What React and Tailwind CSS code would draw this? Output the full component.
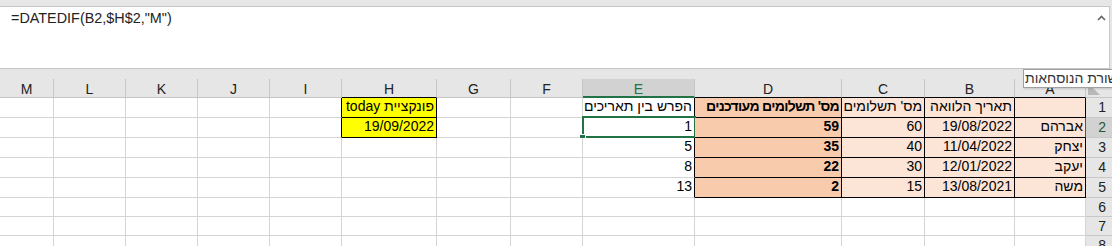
import React from "react";

const G = "border-r-[#d4d4d4]";
const GB = "border-b-[#d4d4d4]";
const K = "border-r-black";
const KB = "border-b-black";

const cols = [
  { k: "M", w: "w-[54px]" },
  { k: "L", w: "w-[72px]" },
  { k: "K", w: "w-[72px]" },
  { k: "J", w: "w-[72px]" },
  { k: "I", w: "w-[72px]" },
  { k: "H", w: "w-[95px]" },
  { k: "G", w: "w-[74px]" },
  { k: "F", w: "w-[72px]" },
  { k: "E", w: "w-[112px]" },
  { k: "D", w: "w-[147px]" },
  { k: "C", w: "w-[83px]" },
  { k: "B", w: "w-[90px]" },
  { k: "A", w: "w-[71px]" },
];

const LIGHT = "bg-[#fce4d6]";
const DARK = "bg-[#f8cbad]";
const YEL = "bg-[#ffff00]";

const data = {
  1: {
    H: { t: "פונקציית today", bg: YEL, rtl: true },
    E: { t: "הפרש בין תאריכים", rtl: true },
    D: { t: "מס' תשלומים מעודכנים", bg: DARK, bold: true, rtl: true, tight: true },
    C: { t: "מס' תשלומים", bg: LIGHT, rtl: true },
    B: { t: "תאריך הלוואה", bg: LIGHT, rtl: true },
    A: { t: "", bg: LIGHT },
  },
  2: {
    H: { t: "19/09/2022", bg: YEL },
    E: { t: "1", sel: true },
    D: { t: "59", bg: DARK, bold: true },
    C: { t: "60", bg: LIGHT },
    B: { t: "19/08/2022", bg: LIGHT },
    A: { t: "אברהם", bg: LIGHT, rtl: true },
  },
  3: {
    E: { t: "5" },
    D: { t: "35", bg: DARK, bold: true },
    C: { t: "40", bg: LIGHT },
    B: { t: "11/04/2022", bg: LIGHT },
    A: { t: "יצחק", bg: LIGHT, rtl: true },
  },
  4: {
    E: { t: "8" },
    D: { t: "22", bg: DARK, bold: true },
    C: { t: "30", bg: LIGHT },
    B: { t: "12/01/2022", bg: LIGHT },
    A: { t: "יעקב", bg: LIGHT, rtl: true },
  },
  5: {
    E: { t: "13" },
    D: { t: "2", bg: DARK, bold: true },
    C: { t: "15", bg: LIGHT },
    B: { t: "13/08/2021", bg: LIGHT },
    A: { t: "משה", bg: LIGHT, rtl: true },
  },
};

const rowHeights = {
  1: "h-[20px]",
  2: "h-[20px]",
  3: "h-[20px]",
  4: "h-[20px]",
  5: "h-[20px]",
  6: "h-[19px]",
  7: "h-[19px]",
  8: "h-[20px]",
};

function borders(col, row) {
  const inTable = ["A", "B", "C", "D"].includes(col) && row >= 1 && row <= 5;
  if (inTable) {
    if (col === "A" && row === 2) return `border-r-[#217346] ${KB}`;
    return `${K} ${KB}`;
  }
  if (col === "E" && row >= 1 && row <= 5) return `${K} ${GB}`;
  if (col === "H" && (row === 1 || row === 2)) return `${K} ${KB}`;
  if (col === "I" && (row === 1 || row === 2)) return `${K} ${GB}`;
  return `${G} ${GB}`;
}

function Cell({ col, row }) {
  const d = (data[row] && data[row][col.k]) || null;
  return (
    <div
      className={`relative box-border shrink-0 h-full border-r border-b ${col.w} ${borders(
        col.k,
        row
      )} ${d && d.bg ? d.bg : "bg-white"}`}
    >
      {d && d.t ? (
        <div
          dir={d.rtl ? "rtl" : "ltr"}
          className={`w-full overflow-hidden whitespace-nowrap pr-[2px] text-[14px] leading-[17px] text-black text-right ${
            d.bold ? "font-bold" : ""
          } ${d.tight ? "tracking-[-0.7px]" : ""}`}
        >
          {d.t}
        </div>
      ) : null}
      {d && d.sel ? (
        <>
          <div className="absolute left-[-1px] top-[-2px] w-[114px] h-[22px] border-2 border-[#217346] pointer-events-none" />
          <div className="absolute left-[-4px] top-[16px] w-[7px] h-[7px] bg-[#217346] border border-white" />
        </>
      ) : null}
    </div>
  );
}

function Row({ row }) {
  const selected = row === 2;
  return (
    <div className={`flex ${rowHeights[row]}`}>
      {cols.map((c) => (
        <Cell key={c.k} col={c} row={row} />
      ))}
      <div
        className={`box-border w-[26px] shrink-0 h-full border-b border-b-[#c8c8c8] text-right pr-[6px] text-[14px] leading-[18px] ${
          selected ? "bg-[#d2d2d2] text-[#1d5a36]" : "bg-[#e6e6e6] text-[#222]"
        }`}
      >
        {row}
      </div>
    </div>
  );
}

export default function App() {
  const headerBottom = (k) => {
    if (k === "E") return "border-b-2 border-b-[#217346] bg-[#d2d2d2] text-[#217346]";
    if (["H", "D", "C", "B", "A"].includes(k)) return "border-b border-b-black bg-[#e6e6e6] text-[#222]";
    return "border-b border-b-[#c6c6c6] bg-[#e6e6e6] text-[#222]";
  };
  return (
    <div className="w-[1112px] h-[246px] overflow-hidden relative bg-[#e6e6e6] font-['Liberation_Sans',Arial,sans-serif]">
      {/* formula bar */}
      <div className="h-[79px] pt-[6px]">
        <div className="relative box-border h-[63px] w-[1110px] bg-white border-t border-b border-r border-[#c6c6c6] pl-[11px] pt-[3px] text-[14.4px] leading-[17px] text-[#222]">
          =DATEDIF(B2,$H$2,"M")
          <svg
            className="absolute left-[1097px] top-[8px]"
            width="9"
            height="6"
            viewBox="0 0 9 6"
          >
            <path d="M1 5 L4.5 1.5 L8 5" fill="none" stroke="#666" strokeWidth="1.6" />
          </svg>
        </div>
      </div>

      {/* column headers */}
      <div className="flex h-[19px]">
        {cols.map((c) => (
          <div
            key={c.k}
            className={`box-border shrink-0 h-full border-r border-r-[#c6c6c6] text-center text-[14px] leading-[18px] pt-[1px] ${c.w} ${headerBottom(
              c.k
            )}`}
          >
            {c.k}
          </div>
        ))}
        <div className="relative box-border w-[26px] shrink-0 h-full bg-[#e6e6e6] border-b border-b-[#c6c6c6]">
          <svg className="absolute left-[2px] top-[4px]" width="12" height="12" viewBox="0 0 12 12">
            <path d="M0 0 L0 12 L12 12 Z" fill="#b8b8b8" />
          </svg>
        </div>
      </div>

      {[1, 2, 3, 4, 5, 6, 7, 8].map((r) => (
        <Row key={r} row={r} />
      ))}

      {/* tooltip */}
      <div className="absolute left-[1023px] top-[69px] h-[19px] bg-white border border-[#a0a0a0] pl-[1px] pr-[4px] whitespace-nowrap text-[14px] leading-[17px] text-[#333] shadow-[1px_1px_2px_rgba(0,0,0,0.15)]">
        <span dir="rtl" className="inline-block">
          שורת הנוסחאות
        </span>
      </div>
    </div>
  );
}
